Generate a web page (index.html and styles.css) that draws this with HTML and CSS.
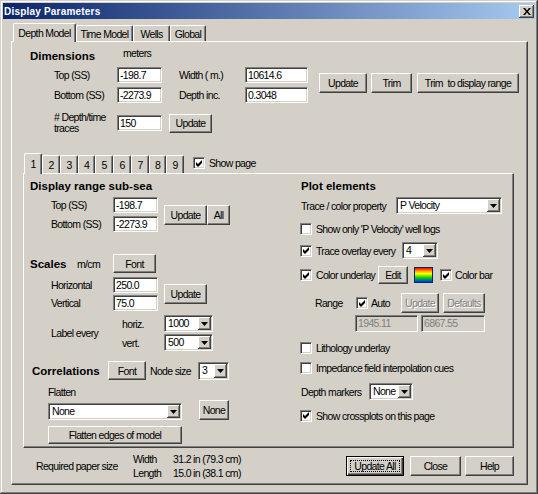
FILE: index.html
```html
<!DOCTYPE html>
<html lang="en">
<head>
  <meta charset="UTF-8">
  <title>Display Parameters</title>
  <link rel="stylesheet" href="styles.css">
</head>
<body>

<div class="window">
  <div class="titlebar">
    <span class="title">Display Parameters</span>
    <span class="close-btn"><svg width="8" height="7" viewBox="0 0 8 7"><path d="M0 0h2l2 2.5L6 0h2L5 3.5 8 7H6L4 4.5 2 7H0l3-3.5z"/></svg></span>
  </div>

  <div class="client">
    <div class="tabs main-tabs">
      <div class="tab active tab-depth">Depth Model</div>
      <div class="tab tab-time">Time Model</div>
      <div class="tab tab-wells">Wells</div>
      <div class="tab tab-global">Global</div>
    </div>

    <div class="panel main-panel">
      <!-- dimensions -->
      <div class="dims-head">
        <h3 class="sec-title dims-title">Dimensions</h3>
        <span class="unit">meters</span>
      </div>
      <div class="dims-grid">
        <span>Top (SS)</span>
        <div class="tb tb-dim">-198.7</div>
        <span>Width ( m.)</span>
        <div class="tb tb-dim-wide">10614.6</div>
        <div class="dims-btns">
          <button class="btn btn-dims-update">Update</button>
          <button class="btn btn-trim">Trim</button>
          <button class="btn btn-trim-range">Trim&nbsp; to display range</button>
        </div>
        <span>Bottom (SS)</span>
        <div class="tb tb-dim">-2273.9</div>
        <span>Depth inc.</span>
        <div class="tb tb-dim-wide">0.3048</div>
      </div>
      <div class="traces-row">
        <span class="traces-label"># Depth/time<br>traces</span>
        <div class="tb tb-dim">150</div>
        <button class="btn btn-traces-update">Update</button>
      </div>

      <!-- page tabs -->
      <div class="page-tabs">
        <div class="tab active">1</div>
        <div class="tab">2</div>
        <div class="tab">3</div>
        <div class="tab narrow">4</div>
        <div class="tab">5</div>
        <div class="tab">6</div>
        <div class="tab">7</div>
        <div class="tab narrow">8</div>
        <div class="tab">9</div>
        <div class="show-page">
          <span class="cb"><svg width="7" height="7" viewBox="0 0 7 7"><path d="M0 2L2 4L6 0V3L2 7L0 5Z"/></svg></span>
          <span class="cb-text">Show page</span>
        </div>
      </div>

      <div class="panel page-panel">
        <div class="col-left">
          <h3 class="sec-title">Display range sub-sea</h3>
          <div class="pair-grid">
            <span>Top (SS)</span>
            <div class="tb tb-dim">-198.7</div>
            <div class="pair-btns">
              <button class="btn btn-upd">Update</button>
              <button class="btn btn-all">All</button>
            </div>
            <span>Bottom (SS)</span>
            <div class="tb tb-dim">-2273.9</div>
          </div>

          <div class="scales-row">
            <h3 class="sec-title scales-title">Scales</h3>
            <span class="scales-unit">m/cm</span>
            <button class="btn btn-font">Font</button>
          </div>
          <div class="pair-grid tight">
            <span>Horizontal</span>
            <div class="tb tb-dim">250.0</div>
            <div class="pair-btns">
              <button class="btn btn-upd">Update</button>
            </div>
            <span>Vertical</span>
            <div class="tb tb-dim">75.0</div>
          </div>

          <div class="label-every">
            <span class="le-label">Label every</span>
            <div class="le-grid">
              <span>horiz.</span>
              <div class="combo combo-le"><span class="combo-val">1000</span><span class="combo-arrow"><svg width="7" height="4" viewBox="0 0 7 4"><path d="M0 0h7L3.5 4z"/></svg></span></div>
              <span>vert.</span>
              <div class="combo combo-le"><span class="combo-val">500</span><span class="combo-arrow"><svg width="7" height="4" viewBox="0 0 7 4"><path d="M0 0h7L3.5 4z"/></svg></span></div>
            </div>
          </div>

          <div class="corr-row">
            <h3 class="sec-title corr-title">Correlations</h3>
            <button class="btn btn-corr-font">Font</button>
            <span class="node-label">Node size</span>
            <div class="combo combo-node"><span class="combo-val">3</span><span class="combo-arrow"><svg width="7" height="4" viewBox="0 0 7 4"><path d="M0 0h7L3.5 4z"/></svg></span></div>
          </div>
          <div class="flatten-label">Flatten</div>
          <div class="flatten-row">
            <div class="combo combo-flatten"><span class="combo-val">None</span><span class="combo-arrow"><svg width="7" height="4" viewBox="0 0 7 4"><path d="M0 0h7L3.5 4z"/></svg></span></div>
            <button class="btn btn-none">None</button>
          </div>
          <button class="btn btn-edges">Flatten edges of model</button>
        </div>

        <div class="col-right">
          <h3 class="sec-title plot-title">Plot elements</h3>
          <div class="row prop-row">
            <span class="prop-label">Trace / color property</span>
            <div class="combo combo-prop"><span class="combo-val">P Velocity</span><span class="combo-arrow"><svg width="7" height="4" viewBox="0 0 7 4"><path d="M0 0h7L3.5 4z"/></svg></span></div>
          </div>
          <div class="row cb-row row-showonly">
            <span class="cb"></span>
            <span class="cb-text">Show only 'P Velocity' well logs</span>
          </div>
          <div class="row overlay-row">
            <span class="cb"><svg width="7" height="7" viewBox="0 0 7 7"><path d="M0 2L2 4L6 0V3L2 7L0 5Z"/></svg></span>
            <span class="cb-text overlay-text">Trace overlay every</span>
            <div class="combo combo-overlay"><span class="combo-val">4</span><span class="combo-arrow"><svg width="7" height="4" viewBox="0 0 7 4"><path d="M0 0h7L3.5 4z"/></svg></span></div>
          </div>
          <div class="row underlay-row">
            <span class="cb"><svg width="7" height="7" viewBox="0 0 7 7"><path d="M0 2L2 4L6 0V3L2 7L0 5Z"/></svg></span>
            <span class="cb-text underlay-text">Color underlay</span>
            <button class="btn btn-edit">Edit</button>
            <span class="swatch"></span>
            <span class="cb cb-colorbar"><svg width="7" height="7" viewBox="0 0 7 7"><path d="M0 2L2 4L6 0V3L2 7L0 5Z"/></svg></span>
            <span class="cb-text">Color bar</span>
          </div>
          <div class="row range-row">
            <span class="range-label">Range</span>
            <span class="cb"><svg width="7" height="7" viewBox="0 0 7 7"><path d="M0 2L2 4L6 0V3L2 7L0 5Z"/></svg></span>
            <span class="auto-text">Auto</span>
            <button class="btn disabled btn-range-upd">Update</button>
            <button class="btn disabled btn-defaults">Defaults</button>
          </div>
          <div class="row range-vals">
            <div class="tb disabled tb-rmin">1945.11</div>
            <div class="tb disabled tb-rmax">6867.55</div>
          </div>
          <div class="row cb-row row-litho">
            <span class="cb"></span>
            <span class="cb-text">Lithology underlay</span>
          </div>
          <div class="row cb-row row-imped">
            <span class="cb"></span>
            <span class="cb-text">Impedance field interpolation cues</span>
          </div>
          <div class="row markers-row">
            <span class="markers-label">Depth markers</span>
            <div class="combo combo-markers"><span class="combo-val">None</span><span class="combo-arrow"><svg width="7" height="4" viewBox="0 0 7 4"><path d="M0 0h7L3.5 4z"/></svg></span></div>
          </div>
          <div class="row cb-row row-cross">
            <span class="cb"><svg width="7" height="7" viewBox="0 0 7 7"><path d="M0 2L2 4L6 0V3L2 7L0 5Z"/></svg></span>
            <span class="cb-text">Show crossplots on this page</span>
          </div>
        </div>
      </div>

      <!-- footer -->
      <div class="footer">
        <span class="paper-label">Required paper size</span>
        <div class="paper-dims">
          <span>Width</span><span>31.2 in (79.3 cm)</span>
          <span>Length</span><span>15.0 in (38.1 cm)</span>
        </div>
        <div class="footer-btns">
          <button class="btn default btn-upd-all"><span class="focus">Update All</span></button>
          <button class="btn btn-close">Close</button>
          <button class="btn btn-help">Help</button>
        </div>
      </div>
    </div>
  </div>
</div>

</body>
</html>
```

FILE: styles.css
```css
* {
  box-sizing: border-box;
}

body {
  margin: 0;
  background: #d4d0c8;
  font-family: "Liberation Sans", Arial, sans-serif;
  font-size: 10.5px;
  letter-spacing: -0.65px;
  color: #000;
}

h3 {
  margin: 0;
}

button {
  font: inherit;
  letter-spacing: inherit;
  color: inherit;
  padding: 0;
  margin: 0;
}

/* window frame */
.window {
  width: 538px;
  height: 494px;
  padding: 3px;
  background: #d4d0c8;
  box-shadow: inset -1px -1px #404040, inset 1px 1px #d4d0c8, inset -2px -2px #808080, inset 2px 2px #fff;
}

.titlebar {
  height: 16px;
  display: flex;
  align-items: center;
  justify-content: space-between;
  padding: 0 1px 0 1px;
  background: linear-gradient(to right, #0a246a, #a6caf0);
}

.title {
  color: #fff;
  font-weight: bold;
  font-size: 10px;
  letter-spacing: 0.2px;
}

.close-btn {
  width: 15px;
  height: 13px;
  display: flex;
  align-items: center;
  justify-content: center;
  background: #d4d0c8;
  box-shadow: inset -1px -1px #404040, inset 1px 1px #fff, inset -2px -2px #808080;
}

.client {
  padding: 4px 7px 0 8px;
}

/* classic controls */
.tabs {
  display: flex;
  align-items: flex-end;
  height: 18px;
  padding-left: 2px;
}

.tab {
  height: 16px;
  display: flex;
  align-items: center;
  justify-content: center;
  background: #d4d0c8;
  border: 1px solid;
  border-bottom: none;
  border-color: #fff #404040 #404040 #fff;
  box-shadow: inset -1px 0 #808080;
  border-radius: 2px 2px 0 0;
  white-space: nowrap;
}

.tab.active {
  height: 19px;
  margin-bottom: -1px;
  padding-bottom: 1px;
  position: relative;
  z-index: 1;
}

.tab-depth { width: 63px; }
.tab-time { width: 57px; }
.tab-wells { width: 37px; }
.tab-global { width: 36px; }

.panel {
  border: 1px solid;
  border-color: #fff #404040 #404040 #fff;
  box-shadow: inset -1px -1px #808080;
}

.tb {
  height: 16px;
  background: #fff;
  border: 1px solid;
  border-color: #808080 #fff #fff #808080;
  box-shadow: inset 1px 1px #404040, inset -1px -1px #d4d0c8;
  padding-left: 2px;
  line-height: 14px;
  white-space: nowrap;
  overflow: hidden;
}

.tb.disabled {
  background: #d4d0c8;
  color: #808080;
  height: 17px;
  line-height: 15px;
}

.btn {
  display: flex;
  align-items: center;
  justify-content: center;
  flex: none;
  background: #d4d0c8;
  border: 1px solid;
  border-color: #fff #404040 #404040 #fff;
  box-shadow: inset -1px -1px #808080;
  white-space: nowrap;
}

.btn.disabled {
  color: #808080;
  text-shadow: 1px 1px #fff;
}

.btn.default {
  border-color: #000;
  box-shadow: inset 1px 1px #fff, inset -1px -1px #404040, inset -2px -2px #808080;
  padding: 3px;
}

.focus {
  flex: 1;
  align-self: stretch;
  display: flex;
  align-items: center;
  justify-content: center;
  border: 1px dotted #000;
}

.combo {
  display: flex;
  flex: none;
  height: 17px;
  padding: 1px;
  background: #fff;
  border: 1px solid;
  border-color: #808080 #fff #fff #808080;
  box-shadow: inset 1px 1px #404040, inset -1px -1px #d4d0c8;
}

.combo-val {
  flex: 1;
  padding-left: 2px;
  line-height: 13px;
  white-space: nowrap;
}

.combo-arrow {
  width: 13px;
  display: flex;
  align-items: center;
  justify-content: center;
  background: #d4d0c8;
  box-shadow: inset -1px -1px #404040, inset 1px 1px #fff, inset -2px -2px #808080;
}

.cb {
  width: 12px;
  height: 12px;
  flex: none;
  display: flex;
  align-items: center;
  justify-content: center;
  background: #fff;
  border: 1px solid;
  border-color: #808080 #fff #fff #808080;
  box-shadow: inset 1px 1px #404040, inset -1px -1px #d4d0c8;
}

.cb-text {
  margin-left: 4px;
  white-space: nowrap;
}

.sec-title {
  font-weight: bold;
  font-size: 11.5px;
  letter-spacing: 0;
  line-height: 14px;
  height: 14px;
  white-space: nowrap;
}

/* main page */
.main-panel {
  height: 444px;
}

.dims-head {
  display: flex;
  align-items: flex-start;
  height: 14px;
  margin: 7px 0 0 18px;
}

.dims-title {
  width: 93px;
}

.unit {
  line-height: 13px;
  margin-top: -2px;
}

.dims-grid {
  display: grid;
  grid-template-columns: 63px 62px 66px 74px auto;
  grid-template-rows: 16px 16px;
  row-gap: 4px;
  align-items: center;
  margin: 4px 0 0 42px;
}

.dims-btns {
  grid-column: 5;
  grid-row: 1 / span 2;
  align-self: start;
  margin-top: 6px;
  display: flex;
}

.btn-dims-update { width: 48px; height: 20px; }
.btn-trim { width: 41px; height: 20px; margin-left: 4px; }
.btn-trim-range { width: 102px; height: 20px; margin-left: 5px; }

.tb-dim { width: 45px; }
.tb-dim-wide { width: 63px; }

.traces-row {
  display: flex;
  align-items: center;
  height: 22px;
  margin: 9px 0 0 42px;
}

.traces-label {
  width: 63px;
  line-height: 11px;
}

.btn-traces-update {
  width: 43px;
  height: 19px;
  margin-left: 7px;
}

/* page tabs */
.page-tabs {
  display: flex;
  align-items: flex-end;
  height: 20px;
  margin: 19px 0 0 11px;
  padding-left: 1px;
}

.page-tabs .tab {
  width: 18px;
  height: 18px;
}

.page-tabs .tab.narrow {
  width: 17px;
}

.page-tabs .tab.active {
  height: 21px;
}

.show-page {
  display: flex;
  align-items: center;
  align-self: center;
  margin-left: 9px;
}

.show-page .cb-text {
  margin-left: 4px;
}

.page-panel {
  display: flex;
  height: 275px;
  margin: 0 13px 0 11px;
  padding-left: 6px;
}

.col-left {
  width: 270px;
  padding-top: 5px;
}

.col-right {
  flex: 1;
  padding-top: 5px;
}

.pair-grid {
  display: grid;
  grid-template-columns: 62px 45px auto;
  grid-template-rows: 16px 16px;
  row-gap: 3px;
  align-items: center;
  margin: 4px 0 0 21px;
}

.pair-grid.tight {
  row-gap: 2px;
}

.pair-btns {
  grid-column: 3;
  grid-row: 1 / span 2;
  align-self: center;
  display: flex;
  margin-left: 6px;
}

.btn-upd { width: 43px; height: 20px; }
.btn-all { width: 23px; height: 20px; }

.scales-row {
  display: flex;
  align-items: center;
  height: 19px;
  margin-top: 22px;
}

.scales-title { width: 47px; }
.scales-unit { width: 36px; }
.btn-font { width: 43px; height: 19px; }

.label-every {
  display: flex;
  align-items: center;
  margin: 4px 0 0 21px;
}

.le-label { width: 71px; }

.le-grid {
  display: grid;
  grid-template-columns: 42px 49px;
  grid-template-rows: 17px 17px;
  row-gap: 2px;
  align-items: center;
}

.combo-le { width: 49px; }

.corr-row {
  display: flex;
  align-items: center;
  height: 19px;
  margin: 10px 0 0 2px;
}

.corr-title { width: 76px; }
.btn-corr-font { width: 38px; height: 19px; }
.node-label { width: 48px; margin-left: 4px; }
.combo-node { width: 31px; height: 18px; }

.flatten-label {
  line-height: 13px;
  margin: 6px 0 0 18px;
}

.flatten-row {
  display: flex;
  align-items: flex-end;
  height: 20px;
  margin: 1px 0 0 18px;
}

.combo-flatten { width: 134px; }
.btn-none { width: 30px; height: 20px; margin-left: 17px; }

.btn-edges {
  width: 134px;
  height: 18px;
  margin: 6px 0 0 18px;
}

/* right column */
.plot-title {
  padding-left: 1px;
}

.row {
  display: flex;
  align-items: center;
}

.cb-row {
  height: 13px;
}

.prop-row { margin-top: 4px; }
.prop-label { width: 96px; padding-left: 1px; }
.combo-prop { width: 106px; }

.row-showonly { margin-top: 8px; }

.overlay-row { margin-top: 7px; }
.overlay-text { width: 86px; }
.combo-overlay { width: 36px; }

.underlay-row { height: 18px; margin-top: 7px; }
.underlay-text { width: 62px; }
.btn-edit { width: 30px; height: 18px; }

.swatch {
  width: 19px;
  height: 16px;
  margin-left: 6px;
  border: 1px solid #0a246a;
  background: linear-gradient(#ff0000, #ffb000 25%, #ffff00 40%, #00d000 70%, #0030ff);
}

.cb-colorbar { margin-left: 7px; }
.cb-colorbar + .cb-text { margin-left: 3px; }

.range-row { height: 20px; margin: 9px 0 0 15px; }
.range-label { width: 41px; }
.auto-text { width: 30px; margin-left: 3px; }
.btn-range-upd { width: 38px; height: 20px; }
.btn-defaults { width: 42px; height: 20px; margin-left: 4px; }

.range-vals { margin: 2px 0 0 55px; }
.tb-rmin { width: 63px; }
.tb-rmax { width: 64px; margin-left: 3px; }

.row-litho { margin-top: 9px; }
.row-imped { margin-top: 7px; }

.markers-row { margin-top: 9px; }
.markers-label { width: 69px; padding-left: 1px; }
.combo-markers { width: 44px; }

.row-cross { margin-top: 9px; }

/* footer */
.footer {
  display: flex;
  align-items: center;
  height: 28px;
  margin: 4px 13px 0 12px;
  padding-left: 12px;
}

.paper-label { width: 97px; }

.paper-dims {
  display: grid;
  grid-template-columns: 40px auto;
  line-height: 14px;
}

.footer-btns {
  display: flex;
  margin-left: auto;
}

.btn-upd-all { width: 58px; height: 20px; }
.btn-close { width: 51px; height: 20px; margin-left: 6px; }
.btn-help { width: 49px; height: 20px; margin-left: 4px; }
```
